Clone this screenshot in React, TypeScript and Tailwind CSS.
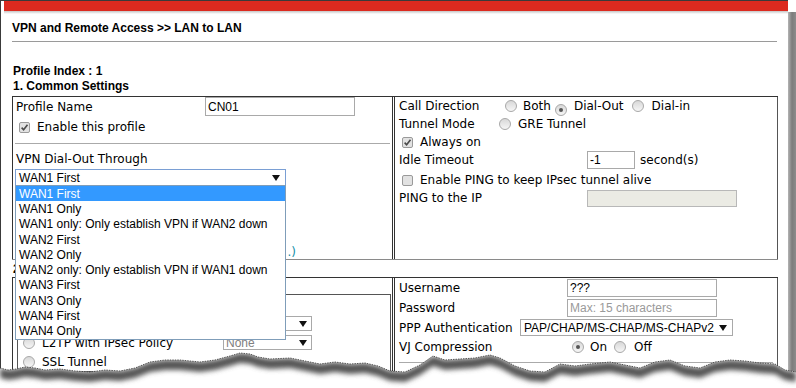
import React from "react";

const lbl = "font-['DejaVu_Sans',Verdana,sans-serif] text-[12px] text-black whitespace-nowrap";
const ar = "font-['Liberation_Sans',Arial,sans-serif] text-[12px] text-black whitespace-nowrap";
const bold = "font-['Liberation_Sans',Arial,sans-serif] text-[12px] font-bold text-black whitespace-nowrap";

const options = [
  "WAN1 First",
  "WAN1 Only",
  "WAN1 only: Only establish VPN if WAN2 down",
  "WAN2 First",
  "WAN2 Only",
  "WAN2 only: Only establish VPN if WAN1 down",
  "WAN3 First",
  "WAN3 Only",
  "WAN4 First",
  "WAN4 Only",
];

// torn paper edge along the bottom
const edge: [number, number][] = [
  [0, 368], [8, 370], [16, 369], [25, 367], [35, 368], [45, 370], [60, 369], [75, 371], [90, 372],
  [105, 370], [120, 371], [135, 368], [150, 362], [165, 360], [180, 360], [200, 362], [215, 360],
  [230, 356], [240, 353], [250, 354], [258, 357], [270, 359], [290, 358], [305, 361],
  [320, 364], [335, 362], [350, 364], [365, 363], [378, 366], [390, 371], [405, 372], [420, 365],
  [433, 356], [445, 360], [460, 359], [475, 358], [490, 355], [500, 358], [515, 366],
  [530, 371], [545, 372], [560, 364], [575, 366], [590, 364], [610, 362], [625, 365],
  [640, 368], [655, 362], [670, 360], [685, 366], [700, 368], [715, 362], [730, 360],
  [745, 361], [760, 363], [775, 364], [785, 370], [796, 372],
];

function Arrow() {
  return (
    <svg width="8" height="6" viewBox="0 0 8 6" className="shrink-0">
      <path d="M0 0H8L4 6Z" fill="#111" />
    </svg>
  );
}

function Check({ on }: { on?: boolean }) {
  return (
    <span className="inline-flex h-[11px] w-[11px] shrink-0 items-center justify-center rounded-[2px] border border-[#9a9a9a] bg-[#e2e2e2]">
      {on && (
        <svg width="9" height="9" viewBox="0 0 9 9">
          <path d="M1.6 4.6L3.6 6.7L7.5 1.8" fill="none" stroke="#4a4a4a" strokeWidth="1.6" />
        </svg>
      )}
    </span>
  );
}

function Radio({ on }: { on?: boolean }) {
  return (
    <span className="inline-flex h-[12px] w-[12px] shrink-0 items-center justify-center rounded-full border border-[#a8a8a8] bg-linear-to-b from-[#d8d8d8] to-[#f6f6f6]">
      {on && <span className="h-[4px] w-[4px] rounded-full bg-[#555]" />}
    </span>
  );
}

function TornEdge() {
  const top = edge.map(([x, y], i) => `${i ? "L" : "M"}${x} ${y}`).join(" ");
  const below = `${top} L796 388 L0 388 Z`;
  const band =
    `${top} ` +
    edge
      .slice()
      .reverse()
      .map(([x, y]) => `L${x} ${y + 10}`)
      .join(" ") +
    " Z";
  return (
    <svg className="pointer-events-none absolute left-0 top-0" width="796" height="388">
      <defs>
        <filter id="tb" x="-5%" y="-50%" width="110%" height="200%">
          <feGaussianBlur stdDeviation="2.4" />
        </filter>
        <clipPath id="tc">
          <path d={below} />
        </clipPath>
      </defs>
      <path d={below} fill="#fff" />
      <g clipPath="url(#tc)">
        <path d={band} fill="#555" filter="url(#tb)" />
      </g>
      <path d={top} fill="none" stroke="#333" strokeWidth="0.8" strokeDasharray="1.5 1" />
    </svg>
  );
}

function DropList() {
  return (
    <div className="absolute left-[15px] top-[185px] w-[271px] border border-[#7f9db9] bg-white">
      {options.map((o, i) => (
        <div
          key={o}
          className={
            i === 0
              ? "flex h-[15.3px] items-center bg-[#3399ff] pl-[3px] font-['Liberation_Sans',Arial,sans-serif] text-[12px] text-white whitespace-nowrap"
              : "flex h-[15.3px] items-center pl-[3px] font-['Liberation_Sans',Arial,sans-serif] text-[12px] text-black whitespace-nowrap"
          }
        >
          {o}
        </div>
      ))}
    </div>
  );
}

export default function App() {
  return (
    <div className="relative flex h-[388px] w-[796px] overflow-hidden bg-white">
      <div className="w-[788px] shrink-0 border-l border-t border-[#3a3a3a]">
        <div className="ml-[3px] h-[10px] bg-[#dc2a1f]" />
        <div className="ml-[3px] h-[3px] bg-linear-to-b from-[#c4c4c4] to-white" />

        <div className="pl-[11px]">
          <div className={`${bold} pt-[7px] leading-[14px]`}>VPN and Remote Access &gt;&gt; LAN to LAN</div>
          <div className="mt-[6px] h-px w-[765px] bg-[#9a9a9a]" />

          <div className={`${bold} mt-[22px] pl-[1px] leading-[15px]`}>Profile Index : 1</div>
          <div className={`${bold} pl-[1px] leading-[15px]`}>1. Common Settings</div>

          {/* table 1 */}
          <div className="mt-[2px] flex h-[164px] w-[766px] border-b border-t border-b-[#8a8a8a] border-t-[#333]">
            <div className="flex w-[381px] flex-col border-l border-r border-[#333]">
              <div className="flex h-[19px] shrink-0 items-center pl-[3px]">
                <span className={`${lbl} w-[189px]`}>Profile Name</span>
                <div className={`${ar} flex h-[19px] w-[150px] items-center border border-[#a9a9a9] pl-[2px]`}>CN01</div>
              </div>
              <div className="flex h-[22px] shrink-0 items-center pl-[6px]">
                <Check on />
                <span className={`${lbl} ml-[7px]`}>Enable this profile</span>
              </div>
              <div className="ml-[2px] mr-[2px] mt-[5px] h-px shrink-0 bg-[#aaa]" />
              <div className={`${lbl} mt-[6px] flex h-[18px] shrink-0 items-center pl-[3px]`}>VPN Dial-Out Through</div>
              <div className="ml-[2px] mt-[1px] flex h-[17px] w-[271px] shrink-0 items-center justify-between border border-[#7a9fd4] pl-[3px] pr-[5px]">
                <span className={ar}>WAN1 First</span>
                <Arrow />
              </div>
              <div className="mt-auto flex h-[15px] w-[283px] shrink-0 items-center justify-end">
                <span className="font-['DejaVu_Sans',Verdana,sans-serif] text-[12px] text-[#1590a8] whitespace-nowrap">.)</span>
              </div>
            </div>

            <div className="w-px" />

            <div className="flex w-[384px] flex-col border-l border-r border-l-[#333] border-r-[#555] pl-[4px]">
              <div className="flex h-[18px] shrink-0 items-center">
                <span className={`${lbl} w-[106px]`}>Call Direction</span>
                <Radio />
                <span className={`${lbl} ml-[6px]`}>Both</span>
                <span className="ml-[4px]"><Radio on /></span>
                <span className={`${lbl} ml-[7px]`}>Dial-Out</span>
                <span className="ml-[8px]"><Radio /></span>
                <span className={`${lbl} ml-[8px]`}>Dial-in</span>
              </div>
              <div className="flex h-[18px] shrink-0 items-center">
                <span className={`${lbl} w-[100px]`}>Tunnel Mode</span>
                <Radio />
                <span className={`${lbl} ml-[7px]`}>GRE Tunnel</span>
              </div>
              <div className="flex h-[18px] shrink-0 items-center pl-[3px]">
                <Check on />
                <span className={`${lbl} ml-[7px]`}>Always on</span>
              </div>
              <div className="flex h-[18px] shrink-0 items-center">
                <span className={`${lbl} w-[188px]`}>Idle Timeout</span>
                <div className={`${ar} flex h-[18px] w-[48px] items-center border border-[#a9a9a9] pl-[2px]`}>-1</div>
                <span className={`${lbl} ml-[5px]`}>second(s)</span>
              </div>
              <div className="mt-[2px] flex h-[18px] shrink-0 items-center pl-[3px]">
                <Check />
                <span className={`${lbl} ml-[7px]`}>Enable PING to keep IPsec tunnel alive</span>
              </div>
              <div className="flex h-[18px] shrink-0 items-center">
                <span className={`${lbl} w-[188px]`}>PING to the IP</span>
                <div className="h-[17px] w-[150px] border border-[#b8b8b8] bg-[#ebebe4]" />
              </div>
            </div>
          </div>

          <div className={`${bold} flex h-[17px] items-center pl-[1px]`}>2.</div>

          {/* table 2 */}
          <div className="flex h-[120px] w-[766px] border-t border-[#333]">
            <div className="flex w-[381px] flex-col border-l border-r border-[#333]">
              <div className="h-[16px] shrink-0" />
              <div className="ml-[4px] w-[374px] shrink-0 border border-[#555]">
                <div className="flex h-[19px] items-center pl-[5px]">
                  <Radio />
                </div>
                <div className="flex h-[19px] items-center pl-[5px]">
                  <Radio on />
                  <span className="ml-[7px] w-[181px]" />
                  <div className="flex h-[15px] w-[89px] items-center justify-end border border-[#a9a9a9] pr-[4px]">
                    <Arrow />
                  </div>
                </div>
                <div className="flex h-[19px] items-center pl-[5px]">
                  <Radio />
                  <span className={`${lbl} ml-[7px] w-[181px]`}>L2TP with IPsec Policy</span>
                  <div className="flex h-[15px] w-[89px] items-center justify-between border border-[#a9a9a9] pl-[2px] pr-[4px]">
                    <span className="font-['Liberation_Sans',Arial,sans-serif] text-[12px] text-[#808080]">None</span>
                    <Arrow />
                  </div>
                </div>
                <div className="flex h-[19px] items-center pl-[5px]">
                  <Radio />
                  <span className={`${lbl} ml-[7px]`}>SSL Tunnel</span>
                </div>
              </div>
            </div>

            <div className="w-px" />

            <div className="flex w-[384px] flex-col border-l border-r border-l-[#333] border-r-[#555] pl-[4px]">
              <div className="flex h-[20px] shrink-0 items-center">
                <span className={`${lbl} w-[168px]`}>Username</span>
                <div className={`${ar} flex h-[18px] w-[150px] items-center border border-[#a9a9a9] pl-[2px]`}>???</div>
              </div>
              <div className="flex h-[20px] shrink-0 items-center">
                <span className={`${lbl} w-[168px]`}>Password</span>
                <div className="flex h-[18px] w-[150px] items-center border border-[#a9a9a9] pl-[2px] font-['Liberation_Sans',Arial,sans-serif] text-[12px] text-[#9a9a9a]">
                  Max: 15 characters
                </div>
              </div>
              <div className="flex h-[19px] shrink-0 items-center">
                <span className={`${lbl} w-[121px]`}>PPP Authentication</span>
                <div className="flex h-[17px] w-[213px] items-center justify-between border border-[#a9a9a9] pl-[3px] pr-[5px]">
                  <span className={ar}>PAP/CHAP/MS-CHAP/MS-CHAPv2</span>
                  <Arrow />
                </div>
              </div>
              <div className="flex h-[19px] shrink-0 items-center">
                <span className={`${lbl} w-[173px]`}>VJ Compression</span>
                <Radio on />
                <span className={`${lbl} ml-[6px]`}>On</span>
                <span className="ml-[7px]"><Radio /></span>
                <span className={`${lbl} ml-[8px]`}>Off</span>
              </div>
              <div className="mr-[4px] mt-[6px] h-px shrink-0 bg-[#aaa]" />
            </div>
          </div>
        </div>
      </div>

      <div className="mt-[12px] w-[8px] shrink-0 bg-linear-to-r from-[#b4b4b4] via-[#7c7c7c] to-[#8c8c8c]" />

      <DropList />
      <TornEdge />
    </div>
  );
}
